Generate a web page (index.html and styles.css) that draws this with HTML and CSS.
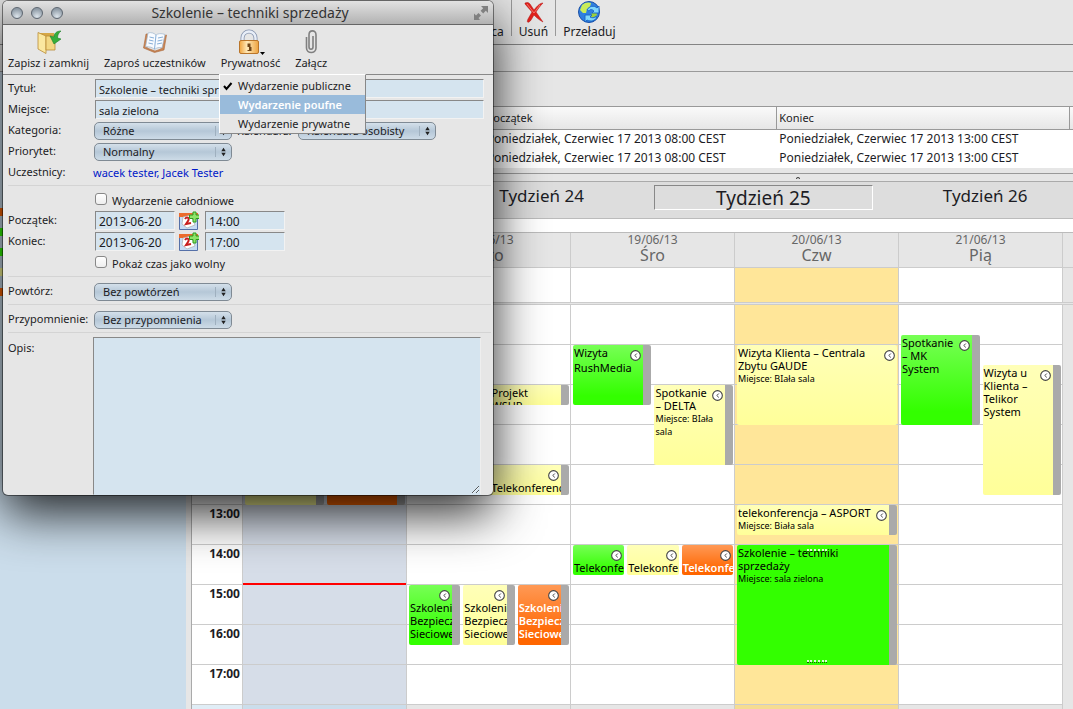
FILE: index.html
```html
<!DOCTYPE html>
<html lang="pl">
<head>
<meta charset="utf-8">
<title>Kalendarz</title>
<link rel="stylesheet" href="styles.css">
</head>
<body>
<svg class="defs" aria-hidden="true">
  <symbol id="clock" viewBox="0 0 10 10"><circle cx="5" cy="5" r="4.4" fill="#fff" stroke="#444"/><path d="M6.200 3.200 4.400 5l1.800 1.800" fill="none" stroke="#333" stroke-width=".8"/></symbol>
  <symbol id="updown" viewBox="0 0 6 10"><path d="M3 0 5.700 4H.3zM3 10 .3 6h5.400z" fill="#222"/></symbol>
  <symbol id="datepick" viewBox="0 0 20 20">
    <path d="M.5 2.500h18v16H.5z" fill="#c5dcf5" stroke="#5570a8"/><path d="M0 2h19v4H0z" fill="#ec6a2c"/>
    <path d="m4 6 8-2 4 10-8 3-5-4z" fill="#fff" stroke="#aaa" stroke-width=".7"/>
    <path d="M6 8c2-3 5-1 3 2l-2 3 5-1" fill="none" stroke="#c81e1e" stroke-width="2"/>
    <path d="M14 1h3v3h3.500v3.500H17V11h-3V7.500h-3.500V4H14z" fill="#8fe36a" stroke="#2c9c1f"/>
  </symbol>
</svg>

<div class="app">
  <header class="toolbar">
    <button class="tool tool-last">Miesiąca</button>
    <button class="tool">
      <svg viewBox="0 0 24 24"><path d="M3 3c2-1 4-.5 5 1l4 6c3-4 6-7 9-7-3 3-5 6-7 9l7 10c-4-2-7-5-9-7-2 3-3 6-5 7-2 1-2-1-1-3l4-7-7-8z" fill="#e3211c" stroke="#b51210" stroke-width=".5"/><path d="m5 4 7 9 6-8" fill="none" stroke="#f98a80" stroke-width=".8"/></svg>
      Usuń</button>
    <button class="tool">
      <svg viewBox="0 0 24 24"><circle cx="12" cy="12" r="10.500" fill="#2f7fe0" stroke="#1a4fa5"/><path d="M5 5c3-3 7-3 9-2l-1 4-3 2-1 4-3 0-3-3z" fill="#c9ec59"/><path d="M16 12l3-1 1 4-4 3-3-2z" fill="#9ccf3c"/><path d="M10 10c2-4 7-5 10-2l2-2v7h-7l2-2c-2-2-4-2-5 0zM20 17c-2 4-6 5-10 3l-2 2v-7h7l-2 2c2 1 4 1 5 0z" fill="#7fd6fb" stroke="#1763c6" stroke-width=".9"/></svg>
      Przeładuj</button>
  </header>
  <div class="strip strip-a"></div>
  <div class="workspace">
    <aside class="sidebar">
      <span class="swatch orange"></span><span class="swatch green"></span><span class="swatch green"></span><span class="swatch yellow"></span><span class="swatch orange"></span>
    </aside>
    <main class="content">
      <div class="strip strip-b"></div>
      <table class="events">
        <thead><tr><th></th><th>Początek</th><th>Koniec</th><th></th></tr></thead>
        <tbody>
          <tr><td></td><td>Poniedziałek, Czerwiec 17 2013 08:00 CEST</td><td>Poniedziałek, Czerwiec 17 2013 13:00 CEST</td><td></td></tr>
          <tr><td></td><td>Poniedziałek, Czerwiec 17 2013 08:00 CEST</td><td>Poniedziałek, Czerwiec 17 2013 13:00 CEST</td><td></td></tr>
        </tbody>
      </table>
      <div class="splitter"><svg viewBox="0 0 6 4"><path d="M1 3V2l2-1 2 1v1L3 2z" fill="#222"/></svg></div>
      <nav class="weeks"><button class="week week-24">Tydzień 24</button><button class="week current">Tydzień 25</button><button class="week">Tydzień 26</button></nav>
      <div class="head">
        <div></div>
        <div></div>
        <div><span>18/06/13</span><b>Wto</b></div>
        <div><span>19/06/13</span><b>Śro</b></div>
        <div><span>20/06/13</span><b>Czw</b></div>
        <div><span>21/06/13</span><b>Pią</b></div>
        <div></div>
      </div>
      <div class="allday"><div></div><div class="past"></div><div></div><div></div><div class="today"></div><div></div><div class="off"></div></div>
      <div class="grid">
        <div class="hours"><span></span><span></span><span></span><span></span><span></span><span>13:00</span><span>14:00</span><span>15:00</span><span>16:00</span><span>17:00</span></div>
        <div class="day past">
          <div class="event yellow bar" style="--start:5;--len:16;--col:1;--span:3"></div>
          <div class="event orange bar" style="--start:5;--len:16;--col:4;--span:3"></div>
          <div class="now"></div>
        </div>
        <div class="day">
          <div class="event yellow bar" style="--start:9;--len:2;--col:4;--span:3">Projekt WSUP</div>
          <div class="event yellow bar" style="--start:17;--len:3;--col:4;--span:3"><svg class="clock"><use href="#clock"/></svg>Telekonferencja</div>
          <div class="event green bar" style="--start:29;--len:6;--col:1;--span:2"><svg class="clock"><use href="#clock"/></svg>Szkolenie Bezpieczeństwo Sieciowe</div>
          <div class="event yellow bar" style="--start:29;--len:6;--col:3;--span:2"><svg class="clock"><use href="#clock"/></svg>Szkolenie Bezpieczeństwo Sieciowe</div>
          <div class="event orange bar" style="--start:29;--len:6;--col:5;--span:2"><svg class="clock"><use href="#clock"/></svg>Szkolenie Bezpieczeństwo Sieciowe</div>
        </div>
        <div class="day">
          <div class="event green bar" style="--start:5;--len:6;--col:1;--span:3"><svg class="clock"><use href="#clock"/></svg>Wizyta RushMedia</div>
          <div class="event yellow bar" style="--start:9;--len:8;--col:4;--span:3"><svg class="clock"><use href="#clock"/></svg>Spotkanie – DELTA<small>Miejsce: BIała sala</small></div>
          <div class="event green" style="--start:25;--len:3;--col:1;--span:2"><svg class="clock"><use href="#clock"/></svg>Telekonferencja</div>
          <div class="event yellow" style="--start:25;--len:3;--col:3;--span:2"><svg class="clock"><use href="#clock"/></svg>Telekonferencja</div>
          <div class="event orange" style="--start:25;--len:3;--col:5;--span:2"><svg class="clock"><use href="#clock"/></svg>Telekonferencja</div>
        </div>
        <div class="day today">
          <div class="event yellow" style="--start:5;--len:8;--col:1;--span:6"><svg class="clock"><use href="#clock"/></svg>Wizyta Klienta – Centrala Zbytu GAUDE<small>Miejsce: BIała sala</small></div>
          <div class="event yellow bar" style="--start:21;--len:3;--col:1;--span:6"><svg class="clock"><use href="#clock"/></svg>telekonferencja – ASPORT<small>Miejsce: Biała sala</small></div>
          <div class="event selected bar" style="--start:25;--len:12;--col:1;--span:6"><p>Szkolenie – techniki sprzedaży</p><small>Miejsce: sala zielona</small><i class="grip grip-top"></i><i class="grip grip-bottom"></i></div>
        </div>
        <div class="day">
          <div class="event green bar" style="--start:4;--len:9;--col:1;--span:3"><svg class="clock"><use href="#clock"/></svg>Spotkanie – MK System</div>
          <div class="event yellow bar" style="--start:7;--len:13;--col:4;--span:3"><svg class="clock"><use href="#clock"/></svg>Wizyta u Klienta – Telikor System</div>
        </div>
        <div class="day off"></div>
      </div>
    </main>
  </div>
</div>

<section class="dialog">
  <div class="titlebar">
    <span class="lights"><i></i><i></i><i></i></span>
    <h1>Szkolenie – techniki sprzedaży</h1>
    <svg class="expand" viewBox="0 0 16 16"><path d="M8 1h7v7l-2.200-2.200-2.600 2.600-2.600-2.600 2.600-2.600zM7 15H1V8.500l2 2 2.500-2.500L8 10.500 5.500 13z" fill="#808080"/></svg>
  </div>
  <div class="actions">
    <button class="tool">
      <svg viewBox="0 0 24 24"><path d="M1 3h16v16H8z" fill="#d6a746"/><path d="M1 2.500 9 6v17.500L1 19z" fill="#fbe8a0" stroke="#b98a35" stroke-width=".8"/><path d="M9 6h9v14H9z" fill="#f3d883" stroke="#b98a35" stroke-width=".8"/><path d="M24 1c-5 0-7 3-7 6l-4-1 4 8 7-5-3.500-1c0-3 1-5 3.500-7z" fill="#35ae3c" stroke="#1c7f27" stroke-width=".6"/></svg>
      Zapisz i zamknij</button>
    <button class="tool">
      <svg viewBox="0 0 24 24"><path d="m3 4-2.500 14 11 4.500L21 20l2.500-15-2 .5L18 19l-6 2-8-3 2-14z" fill="#c98453" stroke="#a9683b" stroke-width=".6"/><path d="M5 3c3-1 6 0 8 2 2-1.500 5-2 9-.5L19 18c-3-1-5-.5-7.500 1.500C9 17 6 16.500 2.500 17z" fill="#f8fbff" stroke="#9db4cc" stroke-width=".7"/><path d="m13 5-1.500 14M6.500 7l4.500 1M6 10l4.500 1M5.500 13l4.500 1M15 8l5-1M14.500 11l5-1M14 14l5-1" fill="none" stroke="#87afd8"/></svg>
      Zaproś uczestników</button>
    <button class="tool">
      <svg viewBox="0 0 24 24"><defs><linearGradient id="brass"><stop offset="0" stop-color="#f0a43e"/><stop offset=".4" stop-color="#ffe9b8"/><stop offset="1" stop-color="#eda23f"/></linearGradient></defs><path d="M4.500 12V8a6.500 6.500 0 0 1 13 0v4" fill="none" stroke="#8593ad" stroke-width="4"/><path d="M4.500 12V8a6.500 6.500 0 0 1 13 0v4" fill="none" stroke="#e8eef8" stroke-width="2.400"/><rect x="1.500" y="10.500" width="19" height="13" rx="1.500" fill="url(#brass)" stroke="#b9752a"/><path d="M9.500 13.500h3V17h1v4h-4v-1h1.500v-3H9.500z" fill="#704619"/><path d="M22 22h5l-2.500 3z" fill="#000"/></svg>
      Prywatność</button>
    <button class="tool">
      <svg viewBox="0 0 24 24"><path d="M7.500 7v11c0 6 9.500 6 9.500 0V5c0-5.500-7-5.500-7 0v12c0 3 4 3 4 0V6" fill="none" stroke="#808080" stroke-width="1.600"/></svg>
      Załącz</button>
  </div>
  <div class="menu" role="menu">
    <button role="menuitem" class="checked"><svg viewBox="0 0 10 10"><path d="m1 5 2.500 3L8.500 2" fill="none" stroke="#000" stroke-width="2"/></svg>Wydarzenie publiczne</button>
    <button role="menuitem" class="hover">Wydarzenie poufne</button>
    <button role="menuitem">Wydarzenie prywatne</button>
  </div>
  <form class="form">
    <fieldset>
      <div class="row"><label for="t">Tytuł:</label><input id="t" class="text" value="Szkolenie – techniki sprzedaży"></div>
      <div class="row"><label for="m">Miejsce:</label><input id="m" class="text" value="sala zielona"></div>
      <div class="row"><label for="k">Kategoria:</label><span class="select"><select id="k"><option>Różne</option></select><svg><use href="#updown"/></svg></span><label for="kal" class="second">Kalendarz:</label><span class="select"><select id="kal"><option>Kalendarz osobisty</option></select><svg><use href="#updown"/></svg></span></div>
      <div class="row"><label for="p">Priorytet:</label><span class="select"><select id="p"><option>Normalny</option></select><svg><use href="#updown"/></svg></span></div>
      <div class="row"><span class="label">Uczestnicy:</span><span class="people"><a href="#">wacek tester</a>, <a href="#">Jacek Tester</a></span></div>
    </fieldset>
    <fieldset class="when">
      <div class="row check first"><input type="checkbox" id="all"><label for="all">Wydarzenie całodniowe</label></div>
      <div class="row"><label for="s">Początek:</label><input id="s" class="text date" value="2013-06-20"><button type="button" class="pick" aria-label="Początek"><svg><use href="#datepick"/></svg></button><input class="text date" aria-label="Początek" value="14:00"></div>
      <div class="row"><label for="e">Koniec:</label><input id="e" class="text date" value="2013-06-20"><button type="button" class="pick" aria-label="Koniec"><svg><use href="#datepick"/></svg></button><input class="text date" aria-label="Koniec" value="17:00"></div>
      <div class="row check"><input type="checkbox" id="free"><label for="free">Pokaż czas jako wolny</label></div>
    </fieldset>
    <fieldset class="single"><div class="row"><label for="r">Powtórz:</label><span class="select"><select id="r"><option>Bez powtórzeń</option></select><svg><use href="#updown"/></svg></span></div></fieldset>
    <fieldset class="single"><div class="row"><label for="a">Przypomnienie:</label><span class="select"><select id="a"><option>Bez przypomnienia</option></select><svg><use href="#updown"/></svg></span></div></fieldset>
    <div class="notes"><label for="o">Opis:</label><textarea id="o"></textarea></div>
  </form>
</section>
</body>
</html>
```
FILE: styles.css
```css
* { box-sizing: border-box; }
body {
  margin: 0;
  height: 100vh;
  overflow: hidden;
  font: 11px/13px "Noto Sans", "Open Sans", sans-serif;
  color: #1c1c24;
  background: #e6e6e6;
}
button, input, select, textarea { font: inherit; color: inherit; margin: 0; }
button { border: 0; background: none; padding: 0; }
.defs { position: absolute; width: 0; height: 0; }

.app { display: flex; flex-direction: column; height: 100vh; }
.toolbar {
  display: flex;
  padding-left: 448px;
  height: 45px;
  border-bottom: 1px solid #848484;
}
.tool {
  display: flex;
  flex-direction: column;
  align-items: center;
  justify-content: flex-end;
  white-space: nowrap;
}
.tool svg { width: 24px; height: 24px; overflow: visible; }
.toolbar .tool { height: 36px; padding: 0 7px; border-left: 1px solid #999; font-size: 12px; line-height: 8px; }
.toolbar .tool svg { margin-bottom: 4px; }
.toolbar .tool-last { border-left: 0; }
.strip-a { height: 27px; border-bottom: 1px solid #9a9a9a; }
.strip-b { height: 34px; }

.workspace { display: flex; flex: 1; min-height: 0; }
.sidebar {
  width: 186px;
  padding-top: 136px;
  background: #cbddeb;
  display: flex;
  flex-direction: column;
  gap: 12px;
}
.swatch { width: 10px; height: 8px; }
.swatch.green { background: #3f0; }
.swatch.yellow { background: #ff9; }
.swatch.orange { background: #f60; }
.content {
  flex: 1;
  min-width: 0;
  display: flex;
  flex-direction: column;
  margin-left: 5px;
  border-left: 1px solid #aaa;
}
.events { width: 100%; table-layout: fixed; border-collapse: separate; border-spacing: 0; background: #fff; white-space: nowrap; }
.events th {
  height: 24px;
  padding: 0 2px 2px;
  text-align: left;
  font-weight: 400;
  border: solid #999;
  border-width: 1px 1px 1px 0;
  background: linear-gradient(#fafafa, #e6e6e6);
}
.events th:last-child { width: 3px; padding: 0; border-right: 0; }
.events td { height: 19px; padding: 0 2px 2px; font-size: 12px; }
.splitter {
  height: 14px;
  border-bottom: 1px solid #aaa;
  background: linear-gradient(#999, #999) 0 5px / 100% 1px no-repeat;
  display: flex;
  justify-content: center;
}
.splitter svg { width: 6px; height: 4px; margin: 8px 0 0 330px; }
.weeks {
  display: grid;
  grid-template-columns: repeat(4, 1fr);
  height: 37px;
  padding: 3px 0 8px 17px;
  margin-right: -23px;
  background: #ddd;
  border-bottom: 1px solid #bbb;
}
.week { font-size: 17px; line-height: 18px; margin: 0 1px; padding-bottom: 4px; }
.week-24 { grid-column: 2; }
.current { font-size: 19px; padding: 0; border: 1px solid; border-color: #888 #fff #fff #888; }
.head, .allday, .grid { display: grid; grid-template-columns: 51px repeat(5, minmax(0, 1fr)) 10px; }
.head { margin-top: 13px; border-top: 1px solid #bbb; border-bottom: 1px solid #ccc; color: #666; background: #e6e6e6; height: 36px; box-shadow: 0 -13px #fff; }
.head div { display: flex; flex-direction: column; align-items: center; padding-top: 1px; border-right: 1px solid #ccc; }
.head div:last-child { border-right: 0; }
.head span { font-size: 12px; line-height: 12px; }
.head b { font-size: 16px; line-height: 18px; font-weight: 400; }
.allday { height: 37px; padding-bottom: 1px; border-bottom: 1px solid #ccc; }
.allday div { background: #fff; border-right: 1px solid #ccc; border-bottom: 1px solid #ccc; }
.allday .past { background: #d6dde8; }
.allday .today { background: #ffe699; }
.allday .off { background: #e6e6e6; border-right: 0; }

.grid { flex: 1; min-height: 0; }
.hours, .day {
  --fill: #fff;
  --rest: #e6e6e6;
  border-right: 1px solid #ccc;
  background: repeating-linear-gradient(transparent 0 39px, #ccc 39px 40px), linear-gradient(var(--fill) 400px, var(--rest) 400px);
}
.hours { --rest: #e0edf6; display: grid; grid-auto-rows: 40px; align-content: start; text-align: right; font-size: 12px; font-weight: 700; padding-right: 2px; }
.hours span { padding-top: 2px; }
.day {
  display: grid;
  grid-template-columns: repeat(6, minmax(0, 1fr));
  grid-template-rows: repeat(40, 10px);
  overflow: hidden;
}
.day.past { --fill: #d6dde8; --rest: #cbddeb; }
.day.today { --fill: #ffe699; --rest: #f5dc92; }
.day.off { border-right: 0; background: #e6e6e6; }
.event {
  position: relative;
  grid-row: var(--start) / span var(--len);
  grid-column: var(--col) / span var(--span);
  margin: 0 1px 0 2px;
  padding: 1px 5px 1px 1px;
  border-radius: 2px;
  overflow: hidden;
  color: #000;
}
.event p { margin: 0 30px 0 0; }
.event small { display: block; font-size: 9px; line-height: 13px; }
.bar { border-right: 8px solid #aaa; }
.event.yellow { background: linear-gradient(#ffffb8, #ff9); }
.event.green { background: linear-gradient(#77ff55, #3f0 85%); }
.event.orange { background: linear-gradient(#ff9955, #f60 85%); color: #fff; font-weight: 600; }
.event.selected { background: #3f0; }
.clock { float: right; width: 11px; height: 11px; margin: 4px -3px 0 0; }
.grip { position: absolute; left: 70px; width: 20px; height: 3px; border-top: 2px dotted #d9ffd0; border-bottom: 1px dotted #175c05; }
.grip-top { top: 4px; }
.grip-bottom { bottom: 2px; }
.now { grid-row: 28; grid-column: 1 / -1; align-self: end; height: 2px; background: #f00; }

.dialog {
  position: absolute;
  left: 3px;
  top: 1px;
  width: 490px;
  height: 494px;
  display: flex;
  flex-direction: column;
  border-radius: 5px;
  background: #e6e6e6;
  box-shadow: 0 0 0 1px rgba(0, 0, 0, .45), 0 18px 50px rgba(0, 0, 0, .85);
}
.titlebar {
  display: flex;
  align-items: center;
  height: 24px;
  padding: 0 4px 0 8px;
  border-radius: 5px 5px 0 0;
  border-bottom: 1px solid #666;
  background: linear-gradient(#e2e2e2, #b2b2b2);
}
.titlebar h1 { flex: 1; margin: 0; text-align: center; font-size: 14px; font-weight: 400; color: #333; }
.lights { display: flex; gap: 8px; width: 52px; }
.lights i { width: 12px; height: 12px; border-radius: 50%; border: 1px solid #5d6670; background: radial-gradient(circle at 50% 85%, #dde5ec, #8f9ba6 75%); }
.expand { width: 16px; height: 16px; margin-left: 36px; }
.actions { display: flex; gap: 15px; height: 50px; padding: 0 5px 3px; border-bottom: 1px solid #888; }
.actions .tool { padding-bottom: 2px; }
.actions .tool svg { margin-bottom: 2px; }
.menu {
  position: absolute;
  left: 216px;
  top: 73px;
  width: 147px;
  padding-top: 1px;
  border: 1px solid;
  border-color: #fff #888 #888 #fff;
  background: #e6e6e6;
  z-index: 1;
}
.menu button { display: flex; align-items: center; gap: 5px; width: 100%; height: 19px; padding-left: 18px; white-space: nowrap; }
.menu .checked { padding-left: 3px; }
.menu svg { width: 10px; height: 10px; }
.menu .hover { background: #99bbdb; color: #fff; font-weight: 600; }

.form { flex: 1; display: flex; flex-direction: column; padding: 3px 2px 0 5px; min-height: 0; }
fieldset { border: 0; border-bottom: 1px solid #d4d4d4; margin: 0; padding: 0 0 2px; min-width: 0; }
.row { display: flex; align-items: center; height: 21px; }
.row > label:first-child, .label { width: 86px; margin-right: 1px; padding-bottom: 3px; white-space: nowrap; }
.row > .second { width: 62px; margin-left: 5px; }
.text { flex: 1; min-width: 0; height: 19px; margin-right: 7px; padding: 1px 3px 0; border: 1px solid; border-color: #888 #f2f2f2 #f2f2f2 #888; background: #d5e4ef; }
.text.date { flex: none; width: 80px; margin-right: 0; font-size: 12px; }
.select { display: flex; align-items: center; width: 138px; margin-left: -1px; }
.select select { appearance: none; width: 100%; height: 18px; padding: 0 8px; line-height: 14px; border: 1px solid #7f8a94; border-radius: 5px; background: linear-gradient(#d4e0ea, #b5c7d7 50%, #cddbe7); }
.select svg { width: 16px; height: 10px; padding: 0 5px; margin-left: -17px; border-left: 1px solid #9fb0bf; pointer-events: none; }
.people { color: #0018c8; margin-left: -2px; }
.people a { color: inherit; text-decoration: none; }
.when { padding: 3px 0 5px; }
.row.check { padding-left: 87px; height: 19px; }
.row.first { margin-bottom: 2px; }
.row.check label { width: auto; margin-left: 5px; padding-top: 3px; }
.row.check input { appearance: none; width: 12px; height: 12px; border: 1px solid #888; border-radius: 3px; background: linear-gradient(#fff, #eee); }
.pick { width: 20px; height: 20px; margin: 0 6px 0 4px; }
.pick svg { width: 20px; height: 20px; }
.single { padding: 4px 0 2px; }
.notes { flex: 1; display: flex; padding-top: 4px; }
.notes label { width: 85px; padding-top: 4px; }
.notes textarea { width: 388px; border: 1px solid; border-color: #888 #eee #d5e4ef #888; background: #d5e4ef; }
```
